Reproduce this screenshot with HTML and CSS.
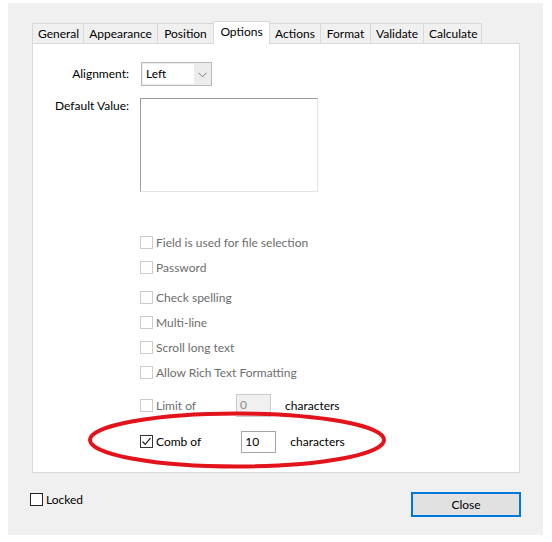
FILE: index.html
```html
<!DOCTYPE html>
<html lang="en">
<head>
<meta charset="utf-8">
<title>Text Field Properties</title>
<link rel="stylesheet" href="styles.css">
</head>
<body>
<div class="dialog">
  <div class="tabs">
    <div class="tab t-general">General</div>
    <div class="tab t-appearance">Appearance</div>
    <div class="tab t-position">Position</div>
    <div class="tab active t-options">Options</div>
    <div class="tab t-actions">Actions</div>
    <div class="tab t-format">Format</div>
    <div class="tab t-validate">Validate</div>
    <div class="tab t-calculate">Calculate</div>
  </div>
  <div class="panel">
    <div class="form-grid">
      <span class="label label-mid">Alignment:</span>
      <div class="select">
        <span class="select-value">Left</span>
        <span class="select-arrow">
          <svg width="9" height="6" viewBox="0 0 9 6"><polyline points="0.5,0.8 4.5,4.8 8.5,0.8" fill="none" stroke="#7a7a7a" stroke-width="1"/></svg>
        </span>
      </div>
      <span class="label label-top">Default Value:</span>
      <div class="textarea"></div>
    </div>
    <div class="checks">
      <div class="check disabled"><span class="box"></span><span>Field is used for file selection</span></div>
      <div class="check disabled"><span class="box"></span><span>Password</span></div>
      <div class="check disabled group-start"><span class="box"></span><span>Check spelling</span></div>
      <div class="check disabled"><span class="box"></span><span>Multi-line</span></div>
      <div class="check disabled"><span class="box"></span><span>Scroll long text</span></div>
      <div class="check disabled"><span class="box"></span><span>Allow Rich Text Formatting</span></div>
      <div class="check disabled limit-row"><span class="box"></span><span>Limit of</span><span class="num num-disabled">0</span><span class="after">characters</span></div>
      <div class="check comb-row"><span class="box checked"><svg width="11" height="11" viewBox="0 0 11 11"><polyline points="1.5,5.5 4.2,8.3 9.5,2.2" fill="none" stroke="#222" stroke-width="1.2"/></svg></span><span>Comb of</span><span class="num">10</span><span class="after">characters</span></div>
    </div>
  </div>
  <div class="footer">
    <div class="check locked"><span class="box enabled"></span><span>Locked</span></div>
    <button class="close" type="button">Close</button>
  </div>
  <svg class="annotation" width="310" height="66" viewBox="0 0 310 66">
    <ellipse cx="155" cy="32" rx="147" ry="26.5" fill="none" stroke="#e3131b" stroke-width="4"/>
  </svg>
</div>
</body>
</html>
```

FILE: styles.css
```css
* { box-sizing: border-box; }
html, body {
  margin: 0;
  padding: 0;
  background: #ffffff;
}
body {
  font-family: Lato, "Liberation Sans", sans-serif;
  font-size: 12px;
  color: #000000;
}
.dialog {
  position: relative;
  margin: 3px 0 0 8px;
  width: 535px;
  height: 532px;
  background: #f0f0f0;
  padding: 18px 0 0 24px;
}
.tabs {
  display: flex;
  align-items: flex-end;
  height: 22px;
}
.tab {
  height: 20px;
  line-height: 19px;
  padding: 0 5px;
  text-align: center;
  border: 1px solid #d9d9d9;
  border-bottom: none;
  border-right: none;
  background: #f0f0f0;
}
.tab.t-calculate { border-right: 1px solid #d9d9d9; }
.tab.active {
  line-height: 19px;
  background: #ffffff;
  border-right: 1px solid #d9d9d9;
  margin-bottom: -1px;
  height: 23px;
  position: relative;
  z-index: 1;
}
.tab.active + .tab { border-left: none; }
.t-general { width: 51px; }
.t-appearance { width: 74px; }
.t-position { width: 56px; }
.t-options { width: 57px; }
.t-actions { width: 50px; }
.t-format { width: 50px; }
.t-validate { width: 53px; }
.t-calculate { width: 59px; }

.panel {
  width: 488px;
  height: 430px;
  background: #ffffff;
  border: 1px solid #d9d9d9;
  padding-top: 18px;
}
.form-grid {
  display: grid;
  grid-template-columns: 96px auto;
  column-gap: 11px;
  row-gap: 12px;
  align-items: start;
  justify-content: start;
}
.label {
  text-align: right;
}
.label-mid {
  line-height: 24px;
}
.label-top {
  line-height: 15px;
}
.select {
  margin-left: 1px;
  width: 71px;
  height: 24px;
  border: 1px solid #b9b9b9;
  background: #ececec;
  display: flex;
  align-items: center;
  padding: 0 0 0 1px;
}
.select-value {
  width: 51px;
  height: 20px;
  background: #ffffff;
  line-height: 19px;
  padding-left: 3px;
}
.select-arrow {
  flex: 1;
  display: flex;
  justify-content: center;
  align-items: center;
  padding-top: 1px;
}
.select-arrow svg { display: block; }
.textarea {
  width: 178px;
  height: 94px;
  background: #ffffff;
  border-top: 1px solid #9f9f9f;
  border-left: 1px solid #9f9f9f;
  border-right: 1px solid #e3e3e3;
  border-bottom: 1px solid #e3e3e3;
}
.checks {
  margin: 38px 0 0 107px;
  display: flex;
  flex-direction: column;
}
.check {
  display: flex;
  align-items: center;
  height: 25px;
}
.check .box {
  width: 13px;
  height: 13px;
  border: 1px solid #333333;
  background: #ffffff;
  margin-right: 3px;
  display: flex;
  align-items: center;
  justify-content: center;
  flex: none;
}
.check.disabled { color: #6d6d6d; }
.check.disabled .box { border-color: #cccccc; }
.check.group-start { margin-top: 5px; }
.check.limit-row { margin-top: 8px; }
.check.comb-row { margin-top: 11px; }
.num {
  margin-left: 40px;
  width: 35px;
  height: 22px;
  border: 1px solid #a6a6a6;
  background: #ffffff;
  color: #000000;
  line-height: 20px;
  padding-left: 3px;
}
.num-disabled {
  height: 23px;
  background: #f0f0f0;
  border-color: #cccccc;
  color: #8a8a8a;
}
.after {
  margin-left: 14px;
  color: #000000;
}
.footer {
  display: flex;
  justify-content: space-between;
  align-items: flex-start;
  margin-top: 19px;
  padding: 0 22px 0 0;
  margin-left: -2px;
}
.check.locked {
  height: 15px;
}
.check.locked .box { border-color: #222222; }
.close {
  width: 110px;
  height: 25px;
  border: 2px solid #0078d7;
  background: #e1e1e1;
  font-family: inherit;
  font-size: 12px;
  color: #000000;
  padding: 0;
  margin: 0;
}
.annotation {
  position: absolute;
  left: 74px;
  top: 405px;
  overflow: visible;
}
```
